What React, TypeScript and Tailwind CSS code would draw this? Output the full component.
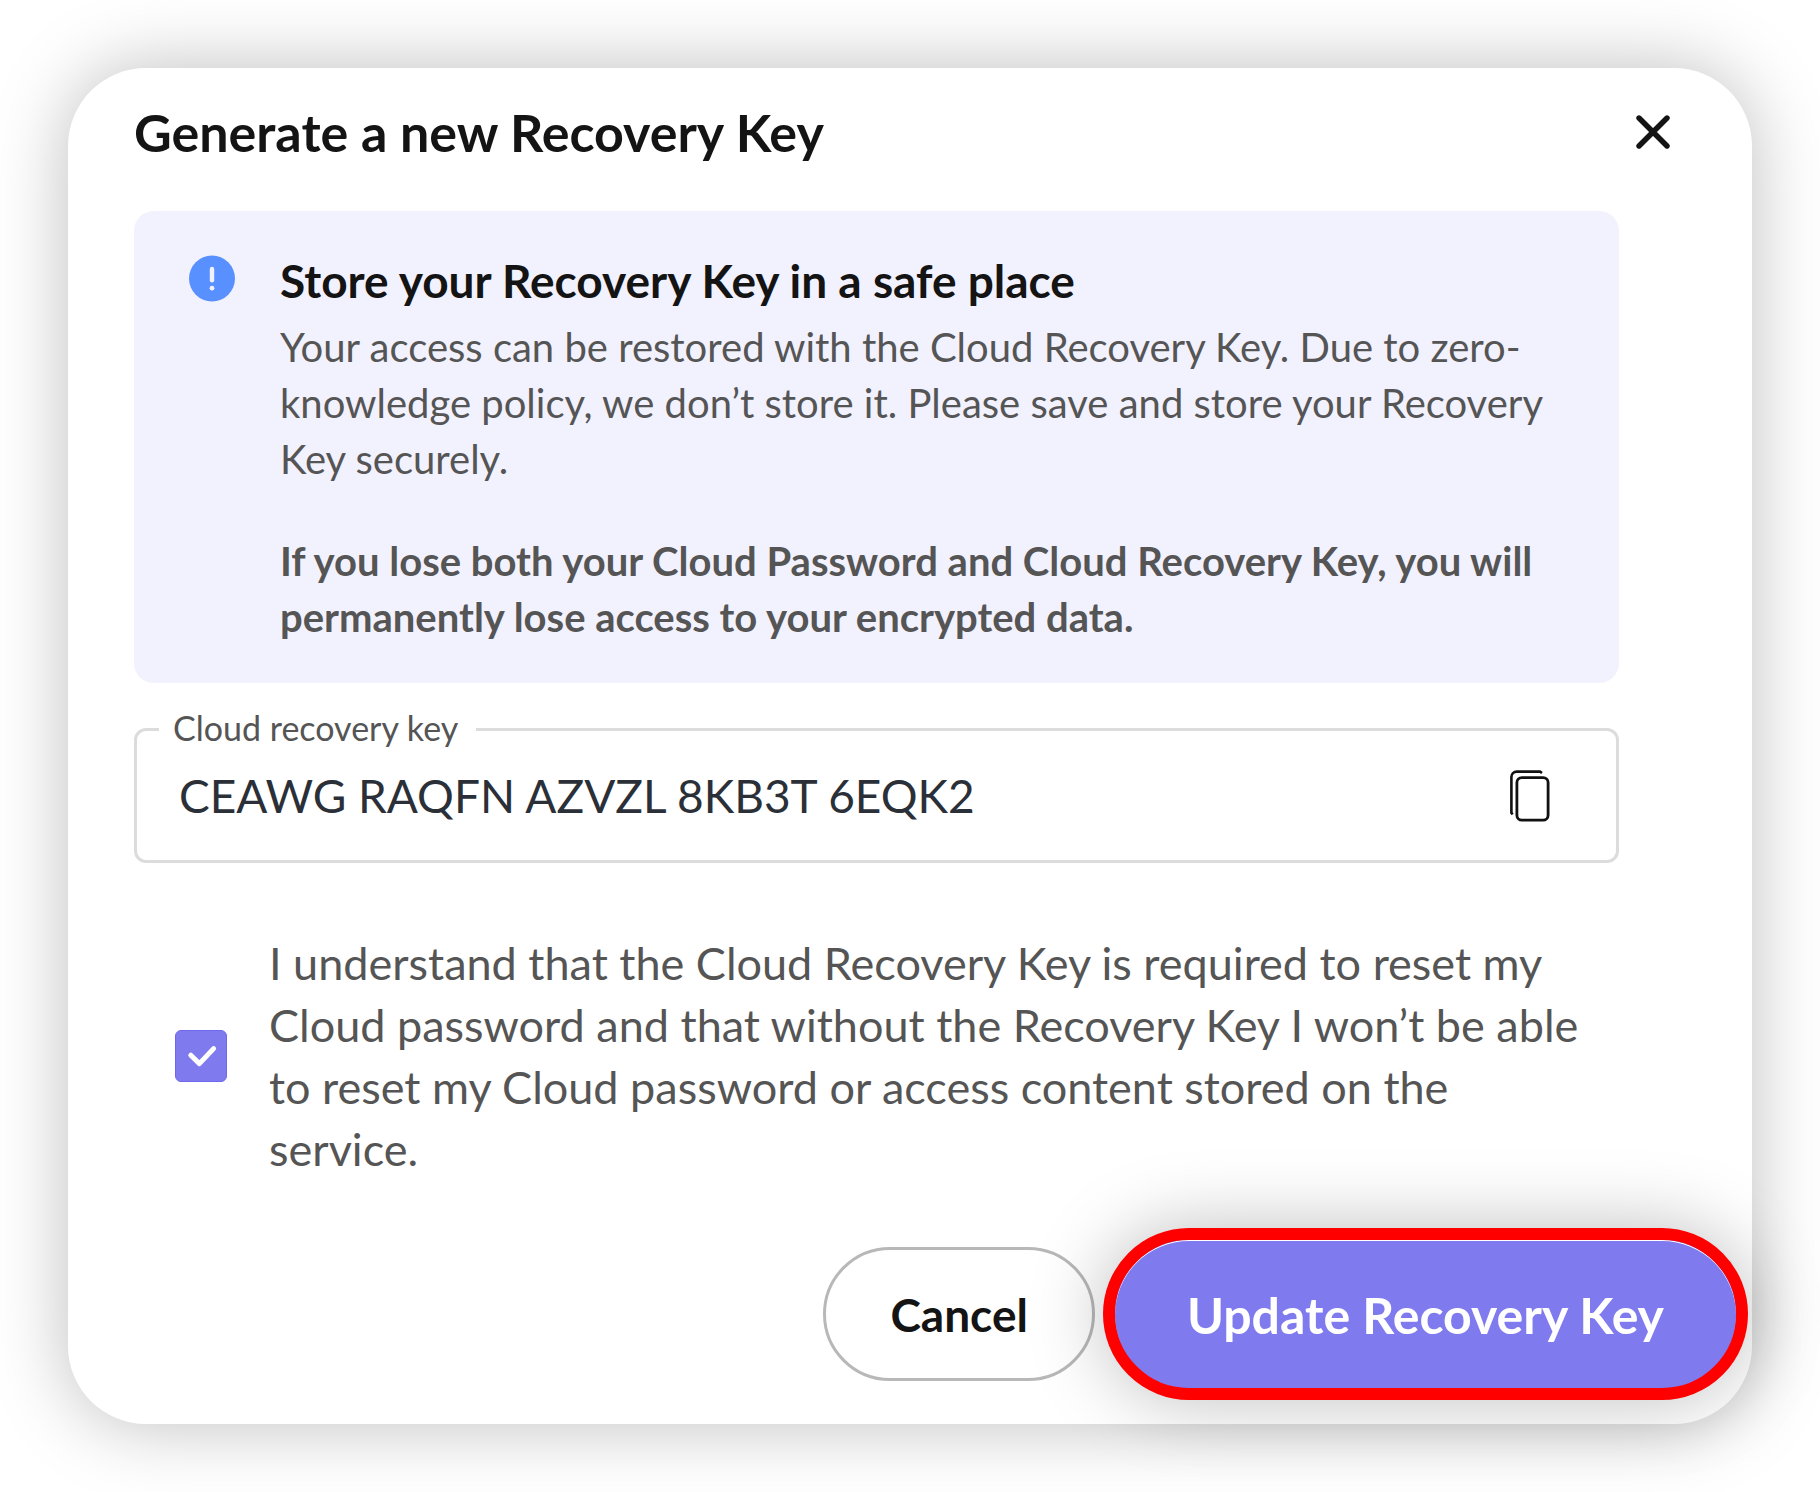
import { useState } from 'react'

const RECOVERY_KEY = 'CEAWG RAQFN AZVZL 8KB3T 6EQK2'

function CloseIcon() {
  return (
    <svg width="34" height="34" viewBox="0 0 34 34" fill="none" stroke="#141414" strokeWidth="5.4" strokeLinecap="round" aria-hidden="true">
      <path d="M3 3L31 31M31 3L3 31" />
    </svg>
  )
}

function AlertIcon() {
  return (
    <svg className="mt-0.5 shrink-0" width="47" height="47" viewBox="0 0 47 47" aria-hidden="true">
      <circle cx="23" cy="23.5" r="23" fill="#5990ff" />
      <path d="M23 14V25.2" stroke="#f2f1fe" strokeWidth="4.4" strokeLinecap="round" />
      <circle cx="23" cy="33.2" r="2.4" fill="#f2f1fe" />
    </svg>
  )
}

function CopyIcon() {
  return (
    <svg width="40" height="52" viewBox="0 0 40 52" fill="none" stroke="#111" strokeWidth="2.8" aria-hidden="true">
      <rect x="6.9" y="7.6" width="31.2" height="42.6" rx="5" />
      <path d="M2.8 44.3L1.4 43V7a5.4 5.4 0 0 1 5.4-5.4H30L32 3" strokeWidth="2.6" />
    </svg>
  )
}

export default function App() {
  const [confirmed, setConfirmed] = useState(true)

  return (
    <div className="min-h-screen bg-white p-[68px] font-['Lato',sans-serif]">
      <div role="dialog" aria-labelledby="dialog-title" className="rounded-[78px] bg-white pt-[34px] pb-6 shadow-[0_0_76px_rgba(0,0,0,0.26)]">
        {/* Header */}
        <div className="flex items-center justify-between pl-[66px] pr-[82px]">
          <h1 id="dialog-title" className="text-[52px] leading-[60px] font-bold text-[#141414]">
            Generate a new Recovery Key
          </h1>
          <button type="button" aria-label="Close">
            <CloseIcon />
          </button>
        </div>

        <div className="pl-[66px] pr-[133px]">
          {/* Warning banner */}
          <div className="mt-[49px] flex gap-11 rounded-[20px] bg-[#f2f1fe] pt-[42px] pr-[60px] pb-[38px] pl-[55px]">
            <AlertIcon />
            <div className="text-[40px] leading-14 text-[#555]">
              <h2 className="mb-2.5 text-[46px] leading-14 font-bold text-[#141414]">
                Store your Recovery Key in a safe place
              </h2>
              <p>
                Your access can be restored with the Cloud Recovery Key. Due to zero-knowledge policy, we don’t store
                it. Please save and store your Recovery Key securely.
              </p>
              <p className="mt-[46px] font-bold">
                If you lose both your Cloud Password and Cloud Recovery Key, you will permanently lose access to your
                encrypted data.
              </p>
            </div>
          </div>

          {/* Recovery key field */}
          <fieldset className="mt-[27px] rounded-xl border-[3px] border-[#dcdcdc] pr-[66px] pb-9 pl-[22px]">
            <legend className="pr-[18px] pl-3.5 pb-0.5 text-[34px] leading-9 text-[#555]">
              <label htmlFor="recovery-key">Cloud recovery key</label>
            </legend>
            <div className="flex items-center pt-5 pl-5">
              <input
                id="recovery-key"
                type="text"
                readOnly
                value={RECOVERY_KEY}
                className="h-14 min-w-0 flex-1 text-[46px] leading-14 text-[#2b3038] outline-none"
              />
              <button type="button" aria-label="Copy recovery key">
                <CopyIcon />
              </button>
            </div>
          </fieldset>

          {/* Confirmation */}
          <div className="mt-[69px] flex items-center gap-[42px] pr-5 pl-[41px]">
            <span className="relative size-13 shrink-0">
              <input
                id="confirm"
                type="checkbox"
                checked={confirmed}
                onChange={(e) => setConfirmed(e.target.checked)}
                className="block size-13 appearance-none rounded-md border border-[#6f68ee] checked:bg-[#7f7aee]"
              />
              {confirmed && (
                <svg className="pointer-events-none absolute inset-0" width="52" height="52" viewBox="0 0 52 52" fill="none" stroke="#fff" strokeWidth="5" strokeLinecap="round" strokeLinejoin="round" aria-hidden="true">
                  <path d="M15.8 25.2L24.4 33.6L38.6 18.6" />
                </svg>
              )}
            </span>
            <label htmlFor="confirm" className="text-[45px] leading-[62px] text-[#555]">
              I understand that the Cloud Recovery Key is required to reset my Cloud password and that without the
              Recovery Key I won’t be able to reset my Cloud password or access content stored on the service.
            </label>
          </div>
        </div>

        {/* Actions */}
        <div className="mt-12 flex items-center justify-end gap-2 pr-1">
          <button type="button" className="h-[134px] rounded-full border-[3px] border-[#b8b8b8] px-16 pt-0.5 text-[46px] leading-14 font-bold text-[#141414]">
            Cancel
          </button>
          <button type="button" className="h-43 rounded-full border-12 border-[#f00] bg-[#7f7aee] px-18 pt-0.5 text-[50px] leading-[60px] font-bold text-white shadow-[inset_0_1px_0_#fff,0_0_76px_rgba(0,0,0,0.26)]">
            Update Recovery Key
          </button>
        </div>
      </div>
    </div>
  )
}
